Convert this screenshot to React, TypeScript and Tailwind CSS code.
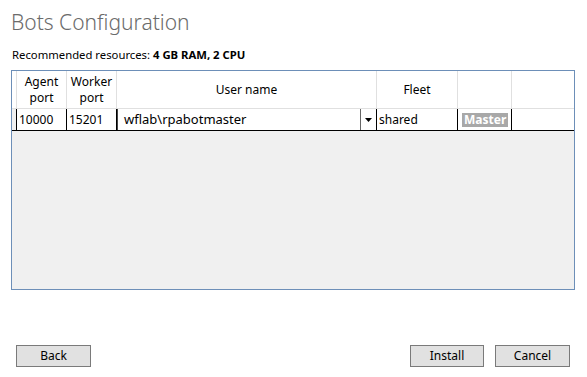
import React from "react";

const cols = "grid-cols-[5px_50px_50px_260px_81px_54px_1fr]";

const App = () => {
  return (
    <div className="w-[587px] h-[377px] bg-white flex flex-col font-['Noto_Sans',sans-serif] text-black overflow-hidden">
      <h1 className="ml-[11px] mt-[7px] h-[30px] text-[21px] leading-[30px] font-light text-[#6b6b6b]">
        Bots Configuration
      </h1>
      <p className="ml-[12px] mt-[10px] text-[11.3px] leading-[16px]">
        Recommended resources: <span className="font-bold">4 GB RAM, 2 CPU</span>
      </p>

      <div className="ml-[11px] mt-[7px] w-[564px] h-[220px] border border-[#6d8fb8] bg-[#f0f0f0] text-[12px]">
        <div className={`grid ${cols} h-[38px] bg-white border-b border-[#e0e0e0]`}>
          <div className="border-r border-[#e0e0e0]" />
          <div className="border-r border-[#e0e0e0] flex flex-col items-center justify-center text-center leading-[16px]">
            <span>Agent</span>
            <span>port</span>
          </div>
          <div className="border-r border-[#e0e0e0] flex flex-col items-center justify-center text-center leading-[16px]">
            <span>Worker</span>
            <span>port</span>
          </div>
          <div className="border-r border-[#e0e0e0] flex items-center justify-center">User name</div>
          <div className="border-r border-[#e0e0e0] flex items-center justify-center">Fleet</div>
          <div className="border-r border-[#e0e0e0]" />
          <div />
        </div>
        <div className={`grid ${cols} h-[22px] bg-white border-b border-black`}>
          <div className="border-r border-black bg-[#f0f0f0]" />
          <div className="border-r border-black flex items-center pl-[2px]">10000</div>
          <div className="border-r border-black flex items-center pl-[2px]">15201</div>
          <div className="border-r border-black flex items-center border-l border-l-[#444]">
            <span className="flex-1 pl-[6px] text-[13px]">wflab\rpabotmaster</span>
            <span className="w-[16px] h-full flex items-center justify-center border-l border-[#666]">
              <svg width="7" height="4" viewBox="0 0 7 4">
                <path d="M0 0h7L3.5 4z" fill="#000" />
              </svg>
            </span>
          </div>
          <div className="border-r border-black flex items-center pl-[2px]">shared</div>
          <div className="border-r border-black flex items-center pl-[4px]">
            <span className="bg-[#a8a8a8] text-white font-bold px-[2px] leading-[14px]">Master</span>
          </div>
          <div />
        </div>
      </div>

      <div className="flex-1" />
      <div className="flex items-center px-[16px] pb-[10px] text-[12px]">
        <button className="w-[75px] h-[22px] bg-[#e1e1e1] border border-[#7a7a7a]">Back</button>
        <div className="flex-1" />
        <button className="w-[74px] h-[22px] bg-[#e1e1e1] border border-[#7a7a7a]">Install</button>
        <button className="ml-[11px] w-[75px] h-[22px] bg-[#e1e1e1] border border-[#7a7a7a] mr-[1px]">
          Cancel
        </button>
      </div>
    </div>
  );
};

export default App;
